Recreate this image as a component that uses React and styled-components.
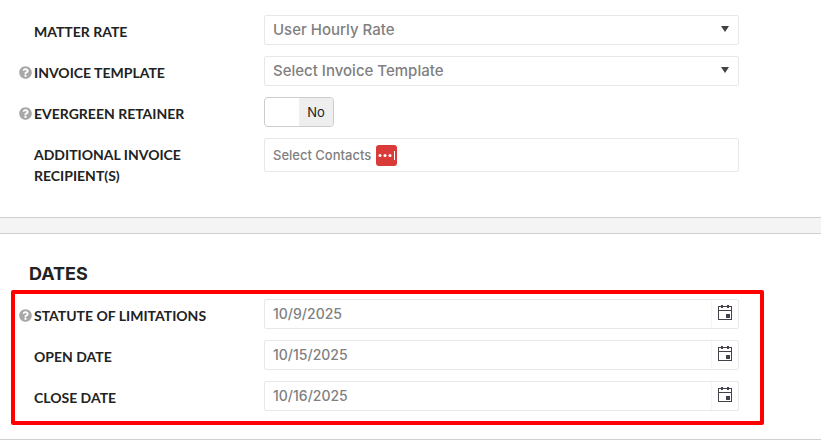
import React, { useState } from "react";
import styled, { createGlobalStyle } from "styled-components";
import { FaQuestionCircle } from "react-icons/fa";

const CalendarIcon = () => (
  <svg width="14" height="15" viewBox="0 0 14 15" shapeRendering="crispEdges" aria-hidden="true">
    <path d="M0 1h14v14H0zM1 2v3h12V2zM1 6v8h12V6z" fill="#45404a" fillRule="evenodd" />
    <path d="M3 0h2v3H3zM9 0h2v3H9zM8 9h4v4H8z" fill="#45404a" />
  </svg>
);

const FormRow = ({ id, label, help, children }) => (
  <Row>
    <Help>{help && <FaQuestionCircle size={13} />}</Help>
    <Label htmlFor={id}>{label}</Label>
    {children}
  </Row>
);

const SelectField = ({ id, options }) => (
  <Field>
    <Select id={id}>
      {options.map((option) => (
        <option key={option}>{option}</option>
      ))}
    </Select>
    <Arrow viewBox="0 0 8 6" aria-hidden="true">
      <path d="M0 0h8L4 6z" />
    </Arrow>
  </Field>
);

const DateField = ({ id, value }) => (
  <Field>
    <TextInput id={id} type="text" defaultValue={value} />
    <CalendarButton type="button" aria-label="Open calendar">
      <CalendarIcon />
    </CalendarButton>
  </Field>
);

const App = () => {
  const [evergreen, setEvergreen] = useState(false);

  return (
    <>
      <GlobalStyle />
      <form>
        <BillingSection>
          <FormRow id="rate" label="MATTER RATE">
            <SelectField id="rate" options={["User Hourly Rate"]} />
          </FormRow>
          <FormRow id="template" label="INVOICE TEMPLATE" help>
            <SelectField id="template" options={["Select Invoice Template"]} />
          </FormRow>
          <FormRow id="evergreen" label="EVERGREEN RETAINER" help>
            <Switch>
              <input
                id="evergreen"
                type="checkbox"
                checked={evergreen}
                onChange={(e) => setEvergreen(e.target.checked)}
              />
              <SwitchText $on={evergreen}>{evergreen ? "Yes" : "No"}</SwitchText>
            </Switch>
          </FormRow>
          <FormRow id="recipients" label="ADDITIONAL INVOICE RECIPIENT(S)">
            <Field $tall>
              <ContactInput id="recipients" type="text" placeholder="Select Contacts" />
              <FillButton type="button" aria-label="Autofill">
                <svg width="21" height="21" viewBox="0 0 21 21" fill="#fff">
                  <circle cx="4" cy="10.5" r="1.5" />
                  <circle cx="9" cy="10.5" r="1.5" />
                  <circle cx="14" cy="10.5" r="1.5" />
                  <path d="M18 6h1v9h-1z" />
                </svg>
              </FillButton>
            </Field>
          </FormRow>
        </BillingSection>
        <Divider />
        <DatesSection>
          <Title>DATES</Title>
          <Highlight>
            <FormRow id="statute" label="STATUTE OF LIMITATIONS" help>
              <DateField id="statute" value="10/9/2025" />
            </FormRow>
            <FormRow id="open" label="OPEN DATE">
              <DateField id="open" value="10/15/2025" />
            </FormRow>
            <FormRow id="close" label="CLOSE DATE">
              <DateField id="close" value="10/16/2025" />
            </FormRow>
          </Highlight>
        </DatesSection>
      </form>
    </>
  );
};

const GlobalStyle = createGlobalStyle`
  * {
    box-sizing: border-box;
  }

  body {
    margin: 0;
    background: #fff;
    color: #222;
    font-family: Inter, sans-serif;
    font-size: 14px;
  }

  input, select, button {
    font: inherit;
  }
`;

const BillingSection = styled.section`
  display: grid;
  gap: 11px;
  padding: 15px 82px 31px 19px;
`;

const Divider = styled.div`
  height: 17px;
  background: #f4f4f4;
  border: solid #d0d0d0;
  border-width: 1px 0;
`;

const DatesSection = styled.section`
  padding: 27px 57px 14px 11px;
  border-bottom: 1px solid #d0d0d0;
`;

const Title = styled.h2`
  margin: 0;
  padding: 0 18px 3px;
  font-size: 18px;
  font-weight: 700;
  line-height: 26px;
`;

const Highlight = styled.div`
  display: grid;
  gap: 11px;
  padding: 5px 21px 10px 4px;
  border: 4px solid #f00;
  border-radius: 2px;
`;

const Row = styled.div`
  display: grid;
  grid-template-columns: 15px 230px 1fr;
  align-items: start;
`;

const Help = styled.span`
  display: flex;
  align-items: center;
  height: 21px;
  margin-top: 6px;
  color: #a8a8a8;
`;

const Label = styled.label`
  margin-top: 6px;
  padding-right: 50px;
  font-family: Lato, sans-serif;
  font-weight: 700;
  line-height: 21px;
`;

const Field = styled.div`
  position: relative;
  display: flex;
  align-items: center;
  height: ${(props) => (props.$tall ? "34px" : "30px")};
  border: 1px solid #e8e8e8;
  border-radius: 2px;
  background: #fff;
`;

const Select = styled.select`
  width: 100%;
  height: 28px;
  padding: 0 24px 2px 8px;
  border: 0;
  outline: 0;
  appearance: none;
  background: none;
  color: #808080;
  font-size: 15px;
  font-weight: 500;
`;

const Arrow = styled.svg`
  position: absolute;
  top: 10px;
  right: 9px;
  width: 8px;
  height: 6px;
  fill: #424242;
  pointer-events: none;
`;

const TextInput = styled.input`
  flex: 1;
  min-width: 0;
  height: 28px;
  padding: 0 8px 2px;
  border: 0;
  outline: 0;
  background: none;
  color: #808080;
  font-weight: 500;
`;

const ContactInput = styled(TextInput)`
  flex: none;
  width: 111px;
  padding: 0 0 0 8px;
  font-size: 13px;

  &::placeholder {
    color: #808080;
  }
`;

const CalendarButton = styled.button`
  display: flex;
  justify-content: center;
  align-items: center;
  width: 27px;
  height: 28px;
  padding: 0 0 3px;
  border: 0;
  border-left: 1px solid #f6f6f6;
  background: none;
`;

const FillButton = styled.button`
  display: flex;
  width: 21px;
  height: 21px;
  padding: 0;
  border: 0;
  border-radius: 3px;
  background: #d83b38;
`;

const Switch = styled.div`
  position: relative;
  width: 70px;
  height: 30px;
  border: 1px solid #ccc;
  border-radius: 4px;
  overflow: hidden;

  input {
    position: absolute;
    inset: 0;
    width: 100%;
    height: 100%;
    margin: 0;
    opacity: 0;
  }
`;

const SwitchText = styled.span`
  display: block;
  width: 34px;
  margin-left: ${(props) => (props.$on ? "0" : "34px")};
  background: #eee;
  font-size: 13px;
  line-height: 28px;
  text-align: center;
`;

export default App;
